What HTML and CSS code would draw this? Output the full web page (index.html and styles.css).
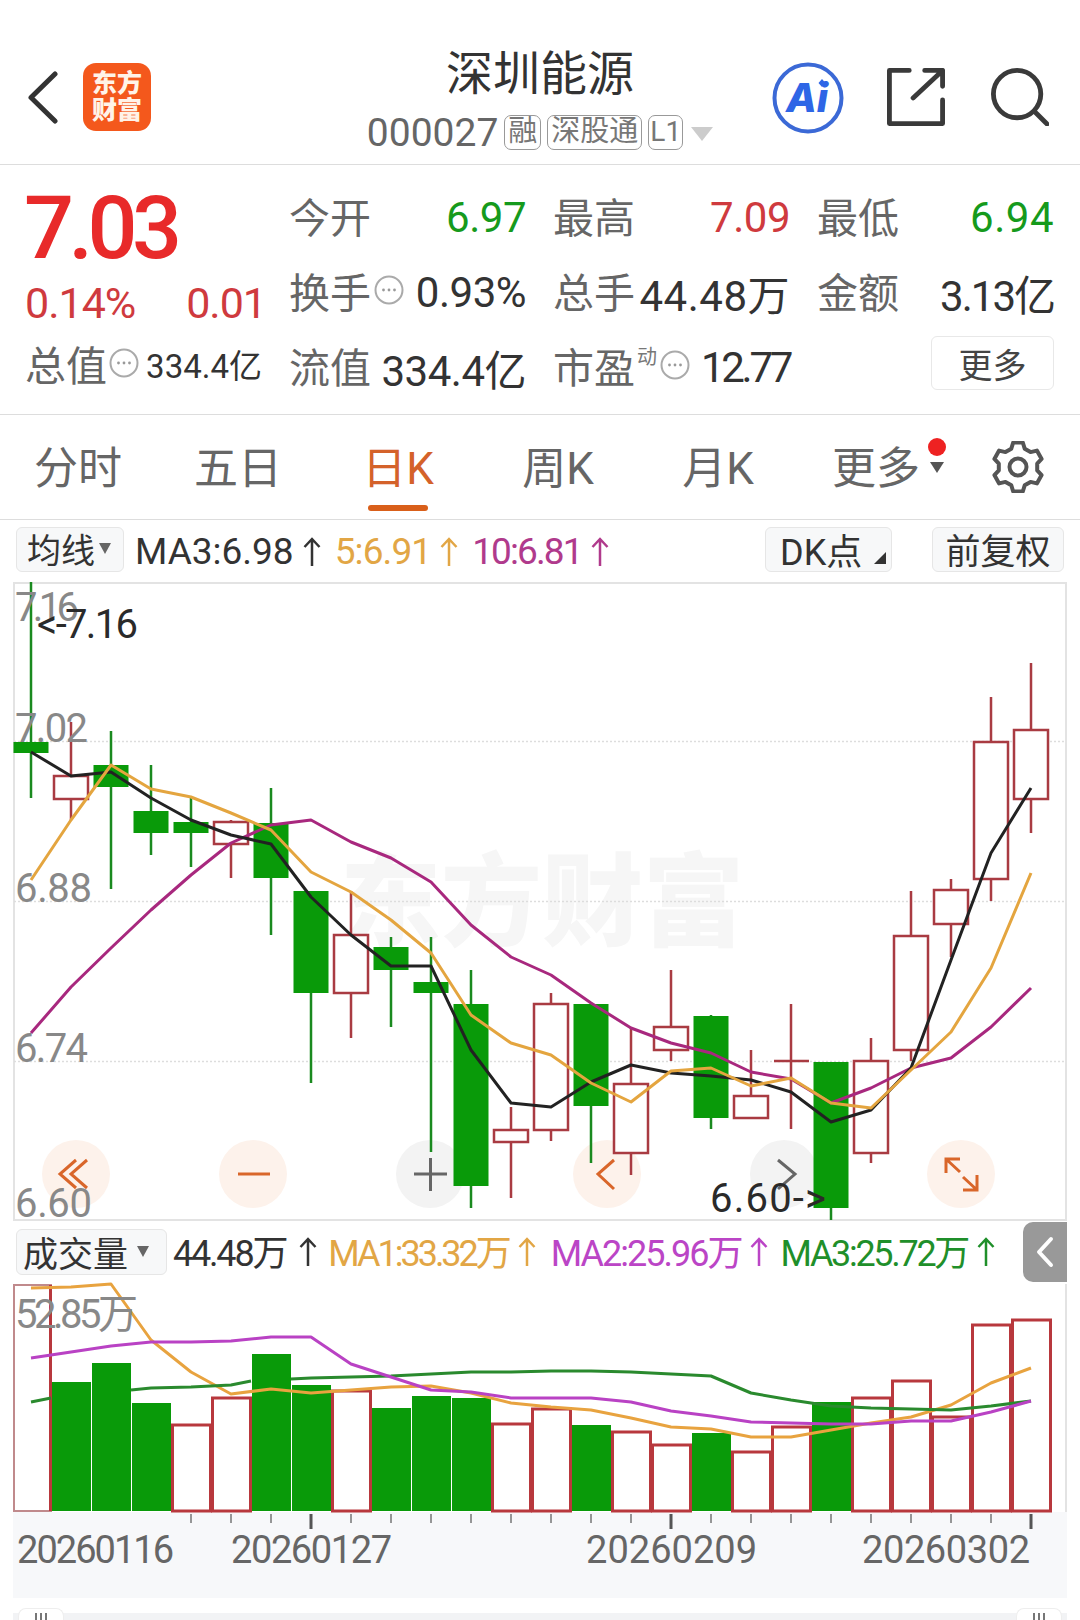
FILE: index.html
```html
<!DOCTYPE html>
<html lang="zh-CN">
<head>
  <meta charset="utf-8">
  <title>深圳能源 - 东方财富</title>
  <link rel="stylesheet" href="styles.css">
</head>
<body>
  <svg class="defs" width="0" height="0">
    <symbol id="info" viewBox="0 0 30 30">
      <circle cx="15" cy="15" r="13.5" fill="none" stroke="#aaa" stroke-width="2"/>
      <circle cx="9.5" cy="15" r="1.4" fill="#999"/>
      <circle cx="15" cy="15" r="1.4" fill="#999"/>
      <circle cx="20.5" cy="15" r="1.4" fill="#999"/>
    </symbol>
    <symbol id="up" viewBox="0 0 18 30">
      <path d="M9 29V2M1.500 10L9 2L16.500 10" fill="none" stroke="currentColor" stroke-width="2.500"/>
    </symbol>
  </svg>

  <header class="header">
    <div class="header-left">
      <svg class="back-icon" viewBox="0 0 31 53"><polyline points="28,3 4,26.5 28,50"/></svg>
      <div class="logo">东方<br>财富</div>
    </div>
    <div class="header-center">
      <div class="stock-name">深圳能源</div>
      <div class="stock-code">
        <span class="code-num">000027</span>
        <span class="tag">融</span>
        <span class="tag">深股通</span>
        <span class="tag tag-level">L1</span>
        <span class="code-caret"></span>
      </div>
    </div>
    <div class="header-right">
      <svg class="ai-icon" viewBox="0 0 72 72">
        <circle cx="36" cy="36" r="33.5"/>
        <text x="35" y="50" text-anchor="middle">Ai</text>
        <path d="M50 17l3.5 4-3.5 4-3.5-4z"/>
      </svg>
      <svg class="line-icon share-icon" viewBox="0 0 60 60">
        <path d="M23 2.500H2.500V57.500H57.500V33"/>
        <path d="M27 31L57.500 2.500M39 2.500H57.500V19"/>
      </svg>
      <svg class="line-icon search-icon" viewBox="0 0 60 60">
        <circle cx="27" cy="27" r="24.500"/>
        <path d="M45 45L58 58"/>
      </svg>
    </div>
  </header>

  <section class="quote">
    <div class="quote-main">
      <div class="price">7.03</div>
      <div class="change"><span>0.14%</span><span>0.01</span></div>
      <div class="cap-row">
        <span class="stat-label">总值</span>
        <svg class="info-icon"><use href="#info"/></svg>
        <span class="cap-value">334.4亿</span>
      </div>
    </div>
    <div class="stats">
      <div class="stat"><span class="stat-label">今开</span><span class="stat-value green">6.97</span></div>
      <div class="stat"><span class="stat-label">最高</span><span class="stat-value red">7.09</span></div>
      <div class="stat"><span class="stat-label">最低</span><span class="stat-value green wide">6.94</span></div>
      <div class="stat">
        <span class="stat-group"><span class="stat-label">换手</span><svg class="info-icon"><use href="#info"/></svg></span>
        <span class="stat-value">0.93%</span>
      </div>
      <div class="stat"><span class="stat-label">总手</span><span class="stat-value wide">44.48万</span></div>
      <div class="stat"><span class="stat-label">金额</span><span class="stat-value narrow">3.13亿</span></div>
      <div class="stat"><span class="stat-label">流值</span><span class="stat-value">334.4亿</span></div>
      <div class="stat">
        <span class="stat-group"><span class="stat-label">市盈</span><sup class="stat-sup">动</sup><svg class="info-icon"><use href="#info"/></svg></span>
        <span class="stat-value narrower">12.77</span>
      </div>
      <div class="stat stat-more"><button class="more-btn">更多</button></div>
    </div>
  </section>

  <nav class="tabs">
    <div class="tab">分时</div>
    <div class="tab">五日</div>
    <div class="tab active">日K</div>
    <div class="tab">周K</div>
    <div class="tab">月K</div>
    <div class="tab tab-more">更多<span class="tab-dot"></span><span class="tab-caret"></span></div>
    <svg class="gear-icon" viewBox="0 0 52 52">
      <polygon points="19.300,7.700 21.200,1.500 30.800,1.500 32.700,7.700 38.500,11.100 44.900,9.600 49.600,17.900 45.200,22.600 45.200,29.400 49.600,34.100 44.900,42.400 38.500,40.900 32.700,44.300 30.800,50.500 21.200,50.500 19.300,44.300 13.500,40.900 7.100,42.400 2.400,34.100 6.800,29.400 6.800,22.600 2.400,17.900 7.100,9.600 13.500,11.100"/>
      <circle cx="26" cy="26" r="8.500"/>
    </svg>
  </nav>

  <div class="ma-bar">
    <div class="select-btn ma-select">均线<span class="caret"></span></div>
    <span class="ma-item ma-black">MA3:6.98<svg class="up-arrow"><use href="#up"/></svg></span>
    <span class="ma-item ma-orange">5:6.91<svg class="up-arrow"><use href="#up"/></svg></span>
    <span class="ma-item ma-purple">10:6.81<svg class="up-arrow"><use href="#up"/></svg></span>
    <div class="select-btn dk-btn">DK点<span class="corner-caret"></span></div>
    <div class="select-btn fq-btn">前复权</div>
  </div>

  <svg class="kline" viewBox="13 582 1054 638">
    <text class="watermark" x="340" y="938">东方财富</text>
    <rect class="chart-frame" x="14" y="583" width="1052" height="637"/>
    <path class="grid-line" d="M14 741.500H1066M14 901.500H1066M14 1061.500H1066"/>

    <circle class="pad-warm" cx="76" cy="1174" r="34"/>
    <circle class="pad-warm" cx="253" cy="1174" r="34"/>
    <circle class="pad-grey" cx="430" cy="1174" r="34"/>
    <circle class="pad-warm" cx="607" cy="1174" r="34"/>
    <circle class="pad-grey" cx="784" cy="1174" r="34"/>
    <circle class="pad-warm" cx="961" cy="1174" r="34"/>

    <g class="candle-up">
      <path d="M71 722V820M231 820V878M351 891V1038M511 1107V1198M551 993V1141M631 1028V1175M671 970V1061M751 1050V1096M791 1004V1129M774 1061H809M871 1038V1163M911 891V1061M951 879V957M991 697V901M1031 663V833"/>
      <rect x="54" y="776" width="34" height="23"/>
      <rect x="214" y="822" width="34" height="22"/>
      <rect x="334" y="935" width="34" height="58"/>
      <rect x="494" y="1130" width="34" height="12"/>
      <rect x="534" y="1004" width="34" height="126"/>
      <rect x="614" y="1084" width="34" height="69"/>
      <rect x="654" y="1027" width="34" height="23"/>
      <rect x="734" y="1096" width="34" height="22"/>
      <rect x="854" y="1061" width="34" height="92"/>
      <rect x="894" y="936" width="34" height="114"/>
      <rect x="934" y="890" width="34" height="34"/>
      <rect x="974" y="742" width="34" height="137"/>
      <rect x="1014" y="730" width="34" height="69"/>
    </g>
    <g class="candle-down">
      <path d="M31 582V798M111 731V889M151 765V855M191 798V867M271 788V935M311 891V1083M391 937V1027M431 937V1152M471 970V1208M591 1004V1163M711 1015V1129M831 1062V1220"/>
      <rect x="13.500" y="742" width="35" height="11"/>
      <rect x="93.500" y="765" width="35" height="22"/>
      <rect x="133.500" y="811" width="35" height="22"/>
      <rect x="173.500" y="822" width="35" height="11"/>
      <rect x="253.500" y="823" width="35" height="55"/>
      <rect x="293.500" y="891" width="35" height="102"/>
      <rect x="373.500" y="947" width="35" height="23"/>
      <rect x="413.500" y="982" width="35" height="11"/>
      <rect x="453.500" y="1004" width="35" height="182"/>
      <rect x="573.500" y="1004" width="35" height="102"/>
      <rect x="693.500" y="1016" width="35" height="102"/>
      <rect x="813.500" y="1062" width="35" height="146"/>
    </g>

    <polyline class="line-purple" points="31,1033 71,987 111,948 151,910 191,875 231,843 271,825 311,820 351,842 391,858 431,882 471,925 511,957 551,975 591,1003 631,1028 671,1043 711,1053 751,1072 791,1079 831,1103 871,1088 911,1068 951,1058 991,1027 1031,988"/>
    <polyline class="line-black" points="31,752 71,776 111,772 151,798 191,820 231,835 271,844 311,897 351,935 391,966 431,966 471,1050 511,1103 551,1107 591,1082 631,1065 671,1073 711,1076 751,1080 791,1092 831,1122 871,1110 911,1068 951,960 991,853 1031,788"/>
    <polyline class="line-orange" points="31,880 71,820 111,765 151,789 191,797 231,813 271,830 311,872 351,892 391,920 431,953 471,1015 511,1043 551,1055 591,1083 631,1102 671,1071 711,1068 751,1086 791,1078 831,1103 871,1108 911,1070 951,1032 991,968 1031,873"/>

    <path class="pad-icon warm" d="M76 1160L60 1174L76 1188M87 1160L71 1174L87 1188M238 1174H270M614 1160L598 1174L614 1189M946 1173V1159H960M946 1159L960 1172M977 1175V1190H963M977 1190L963 1177"/>
    <path class="pad-icon grey" d="M414 1174H447M430.500 1158V1191M778 1160L795 1174L778 1189"/>

    <text class="axis-label" x="15" y="621" textLength="64">7.16</text>
    <text class="axis-label" x="15" y="742" textLength="73">7.02</text>
    <text class="axis-label" x="15" y="902" textLength="77">6.88</text>
    <text class="axis-label" x="15" y="1062" textLength="73">6.74</text>
    <text class="axis-label" x="15" y="1217" textLength="77">6.60</text>
    <text class="mark-label" x="37" y="638" textLength="101">&lt;-7.16</text>
    <text class="mark-label" x="710" y="1212" textLength="116">6.60-&gt;</text>
  </svg>

  <div class="vol-bar">
    <div class="select-btn vol-select">成交量<span class="caret"></span></div>
    <span class="ma-item vol-total">44.48万<svg class="up-arrow"><use href="#up"/></svg></span>
    <span class="ma-item ma-orange">MA1:33.32万<svg class="up-arrow"><use href="#up"/></svg></span>
    <span class="ma-item ma-magenta">MA2:25.96万<svg class="up-arrow"><use href="#up"/></svg></span>
    <span class="ma-item ma-green">MA3:25.72万<svg class="up-arrow"><use href="#up"/></svg></span>
    <div class="side-tab">
      <svg viewBox="0 0 20 32"><polyline points="16,3 4,16 16,29"/></svg>
    </div>
  </div>

  <svg class="volume" viewBox="13 1284 1054 314">
    <rect class="axis-band" x="13" y="1512" width="1054" height="86"/>
    <path class="chart-side" d="M1066 1284V1512"/>
    <rect class="bar-first" x="14" y="1285" width="37" height="226"/>
    <path class="bar-first-edge" d="M50.500 1285V1511"/>
    <g class="bar-up">
      <rect x="172.500" y="1425" width="38" height="86"/>
      <rect x="212.500" y="1398" width="38" height="113"/>
      <rect x="332.500" y="1391" width="38" height="120"/>
      <rect x="492.500" y="1424" width="38" height="87"/>
      <rect x="532.500" y="1409" width="38" height="102"/>
      <rect x="612.500" y="1432" width="38" height="79"/>
      <rect x="652.500" y="1445" width="38" height="66"/>
      <rect x="732.500" y="1452" width="38" height="59"/>
      <rect x="772.500" y="1427" width="38" height="84"/>
      <rect x="852.500" y="1398" width="38" height="113"/>
      <rect x="892.500" y="1381" width="38" height="130"/>
      <rect x="932.500" y="1417" width="38" height="94"/>
      <rect x="972.500" y="1325" width="38" height="186"/>
      <rect x="1012.500" y="1320" width="38" height="191"/>
    </g>
    <g class="bar-down">
      <rect x="52" y="1382" width="39" height="129"/>
      <rect x="92" y="1363" width="39" height="148"/>
      <rect x="132" y="1403" width="39" height="108"/>
      <rect x="252" y="1354" width="39" height="157"/>
      <rect x="292" y="1385" width="39" height="126"/>
      <rect x="372" y="1408" width="39" height="103"/>
      <rect x="412" y="1396" width="39" height="115"/>
      <rect x="452" y="1398" width="39" height="113"/>
      <rect x="572" y="1425" width="39" height="86"/>
      <rect x="692" y="1433" width="39" height="78"/>
      <rect x="812" y="1402" width="39" height="109"/>
    </g>
    <polyline class="vol-orange" points="31,1288 71,1287 111,1284 151,1340 191,1372 231,1394 271,1389 311,1393 351,1390 391,1387 431,1386 471,1393 511,1403 551,1407 591,1410 631,1418 671,1427 711,1429 751,1437 791,1437 831,1430 871,1423 911,1417 951,1405 991,1383 1031,1368"/>
    <polyline class="vol-green" points="31,1402 51,1398"/>
    <polyline class="vol-green" points="131,1390 151,1388 191,1387 231,1385 251,1381"/>
    <polyline class="vol-green" points="291,1379 311,1378 351,1377 391,1376 431,1374 471,1372 511,1372 551,1371 591,1371 631,1372 671,1374 711,1376 751,1393 791,1400 831,1406 871,1408 911,1409 951,1410 991,1406 1031,1401"/>
    <polyline class="vol-magenta" points="31,1358 71,1352 111,1346 151,1342 191,1342 231,1341 271,1337 311,1337 351,1364 391,1377 431,1390 471,1392 511,1398 551,1398 591,1398 631,1402 671,1411 711,1416 751,1422 791,1423 831,1424 871,1424 911,1421 951,1421 991,1412 1031,1401"/>
    <text class="axis-label" x="15" y="1328" textLength="123">52.85万</text>

    <path class="tick" d="M191 1514V1523M231 1514V1523M271 1514V1523M351 1514V1523M391 1514V1523M431 1514V1523M471 1514V1523M511 1514V1523M551 1514V1523M591 1514V1523M631 1514V1523M711 1514V1523M751 1514V1523M791 1514V1523M831 1514V1523M871 1514V1523M911 1514V1523M951 1514V1523M991 1514V1523"/>
    <path class="tick-major" d="M311 1514V1529M671 1514V1529M1031 1514V1529"/>
    <text class="date-label" x="17" y="1563" textLength="157">20260116</text>
    <text class="date-label" x="231" y="1563" textLength="161">20260127</text>
    <text class="date-label" x="586" y="1563" textLength="171">20260209</text>
    <text class="date-label" x="862" y="1563" textLength="168">20260302</text>
  </svg>

  <div class="range">
    <div class="range-handle"><span></span><span></span><span></span></div>
    <div class="range-handle"><span></span><span></span><span></span></div>
  </div>
</body>
</html>
```

FILE: styles.css
```css
* {
  box-sizing: border-box;
}

html, body {
  margin: 0;
  height: 1620px;
  overflow: hidden;
}

body {
  width: 1080px;
  background: #fff;
  color: #333;
  font-family: Roboto, "Noto Sans CJK SC", sans-serif;
}

.defs {
  position: absolute;
}

/* top bar */
.header {
  display: grid;
  grid-template-columns: 1fr auto 1fr;
  height: 165px;
  border-bottom: 1px solid #ddd;
}

.header-left {
  display: flex;
  align-items: flex-start;
  padding: 63px 0 0 27px;
  gap: 25px;
}

.back-icon {
  width: 31px;
  height: 53px;
  margin-top: 8px;
}

.back-icon polyline {
  fill: none;
  stroke: #333;
  stroke-width: 5;
  stroke-linecap: round;
  stroke-linejoin: round;
}

.logo {
  width: 68px;
  height: 68px;
  padding-top: 7px;
  background: #f4581c;
  border-radius: 13px;
  color: #fff3e8;
  font-size: 25px;
  font-weight: 900;
  line-height: 27px;
  text-align: center;
}

.header-center {
  padding-top: 44px;
  text-align: center;
}

.stock-name {
  font-size: 47px;
  line-height: 60px;
  color: #333;
}

.stock-code {
  display: flex;
  align-items: center;
  gap: 6px;
  margin-top: 11px;
  height: 35px;
  color: #666;
}

.code-num {
  font-size: 39px;
  line-height: 35px;
  padding-top: 2px;
}

.tag {
  height: 35px;
  padding: 0 3px;
  border: 1.500px solid #999;
  border-radius: 7px;
  font-size: 29px;
  line-height: 31px;
  color: #777;
}

.tag-level {
  padding: 0 1px;
  font-size: 28px;
}

.code-caret {
  width: 0;
  height: 0;
  margin: 2px 0 0 2px;
  border-left: 11px solid transparent;
  border-right: 11px solid transparent;
  border-top: 14px solid #ccc;
}

.header-right {
  display: flex;
  justify-content: flex-end;
  align-items: flex-start;
  gap: 46px;
  padding: 62px 31px 0 0;
}

.ai-icon {
  width: 72px;
  height: 72px;
  margin-right: -3px;
}

.ai-icon circle {
  fill: none;
  stroke: #3b69d6;
  stroke-width: 4;
}

.ai-icon text {
  fill: #2e66e6;
  font-family: Inter, sans-serif;
  font-size: 40px;
  font-style: italic;
  font-weight: 800;
}

.ai-icon path {
  fill: #2e66e6;
}

.line-icon {
  width: 58px;
  height: 58px;
  margin-top: 6px;
  fill: none;
  stroke: #3a3a3a;
  stroke-width: 5;
  stroke-linecap: round;
  stroke-linejoin: round;
}

/* quote block */
.quote {
  display: flex;
  gap: 27px;
  height: 250px;
  padding: 15px 25px 0;
  border-bottom: 1px solid #ddd;
}

.quote-main {
  width: 237px;
  flex: none;
}

.price {
  height: 96px;
  margin-left: -1px;
  color: #e82a2a;
  font-size: 88px;
  font-weight: 500;
  letter-spacing: -5.500px;
  line-height: 96px;
}

.change {
  display: flex;
  justify-content: space-between;
  margin-right: -4px;
  color: #cf3a3e;
  font-size: 43px;
  letter-spacing: -1px;
  line-height: 54px;
}

.cap-row {
  display: flex;
  align-items: center;
  height: 72px;
}

.cap-row .info-icon {
  margin: -6px 0 0 2px;
}

.cap-value {
  margin: -4px 0 0 auto;
  font-size: 33px;
  color: #333;
}

.stats {
  display: grid;
  grid-template-columns: repeat(3, 237px);
  grid-auto-rows: 75px;
  column-gap: 27px;
}

.stat {
  display: flex;
  justify-content: space-between;
  align-items: center;
}

.stat-group {
  display: flex;
  align-items: center;
}

.stat-label {
  margin-top: -6px;
  color: #666;
  font-size: 41px;
}

.stat-value {
  color: #333;
  font-size: 42px;
  letter-spacing: -0.500px;
}

.stat-value.green {
  color: #169a1c;
}

.stat-value.red {
  color: #cf3a3e;
}

.stat-value.wide {
  letter-spacing: 0.500px;
}

.stat-value.narrow {
  letter-spacing: -2px;
}

.stat-value.narrower {
  letter-spacing: -3.300px;
}

.stat-sup {
  align-self: flex-start;
  margin: 3px 0 0 2px;
  color: #777;
  font-size: 20px;
  line-height: 26px;
}

.info-icon {
  width: 30px;
  height: 30px;
  margin: -6px 0 0 3px;
}

.stat-more {
  justify-content: flex-end;
  padding-bottom: 9px;
}

.more-btn {
  width: 123px;
  height: 54px;
  padding: 0;
  background: #fff;
  border: 1.500px solid #e8e8e8;
  border-radius: 6px;
  color: #444;
  font-family: inherit;
  font-size: 34px;
}

/* period tabs */
.tabs {
  display: flex;
  align-items: center;
  height: 105px;
  margin-left: -2px;
  border-bottom: 1px solid #ddd;
}

.tab {
  position: relative;
  width: 160px;
  height: 104px;
  color: #666;
  font-size: 44px;
  line-height: 108px;
  text-align: center;
}

.tab.active {
  color: #d4622a;
}

.tab.active::after {
  content: "";
  position: absolute;
  left: 50px;
  bottom: 8px;
  width: 60px;
  height: 6px;
  background: #d95f1a;
  border-radius: 3px;
}

.tab-more {
  padding-right: 4px;
}

.tab-dot {
  position: absolute;
  left: 130px;
  top: 23px;
  width: 18px;
  height: 18px;
  background: #ee2222;
  border-radius: 50%;
}

.tab-caret {
  position: absolute;
  left: 132px;
  top: 47px;
  border-left: 7px solid transparent;
  border-right: 7px solid transparent;
  border-top: 11px solid #555;
}

.gear-icon {
  width: 52px;
  height: 52px;
  margin-left: 34px;
  fill: none;
  stroke: #555;
  stroke-width: 4;
  stroke-linejoin: round;
}

/* indicator rows */
.ma-bar,
.vol-bar {
  display: flex;
  align-items: center;
  height: 62px;
  padding-left: 16px;
}

.ma-bar {
  padding-bottom: 3px;
}

.select-btn {
  display: flex;
  flex: none;
  align-items: center;
  height: 45px;
  padding-bottom: 2px;
  background: #f7f8f9;
  border: 1.500px solid #e6e6e6;
  border-radius: 6px;
  color: #333;
  font-size: 34px;
}

.ma-select {
  width: 108px;
  padding-left: 10px;
  margin-right: 11px;
}

.caret {
  margin-left: 4px;
  border-left: 6px solid transparent;
  border-right: 6px solid transparent;
  border-top: 11px solid #666;
}

.ma-item {
  display: flex;
  flex: none;
  align-items: center;
  margin: 4px 14px 0 0;
  font-size: 37px;
  white-space: nowrap;
}

.up-arrow {
  width: 18px;
  height: 30px;
  margin-left: 9px;
}

.ma-black,
.vol-total {
  color: #333;
}

.ma-orange {
  color: #e2a645;
}

.ma-purple {
  color: #b03a8c;
}

.ma-magenta {
  color: #bb45c6;
}

.ma-green {
  color: #1f8f2a;
}

.ma-bar .ma-orange {
  letter-spacing: -0.900px;
}

.ma-bar .ma-purple {
  letter-spacing: -1.900px;
}

.dk-btn {
  position: relative;
  width: 127px;
  margin-left: auto;
  padding-left: 14px;
  font-size: 36px;
}

.corner-caret {
  position: absolute;
  right: 5px;
  bottom: 7px;
  border-left: 12px solid transparent;
  border-bottom: 12px solid #333;
}

.fq-btn {
  justify-content: center;
  width: 132px;
  margin: 0 16px 0 40px;
  font-size: 35px;
}

.kline,
.volume {
  display: block;
  margin-left: 13px;
  width: 1054px;
  overflow: visible;
}

.kline {
  height: 638px;
}

.volume {
  height: 314px;
}

.watermark {
  fill: #f6f6f6;
  font-family: "Noto Sans CJK SC", sans-serif;
  font-size: 101px;
  font-weight: 900;
}

.chart-frame {
  fill: none;
  stroke: #e3e3e3;
  stroke-width: 2;
}

.grid-line {
  fill: none;
  stroke: #ddd;
  stroke-width: 1.500;
  stroke-dasharray: 2 2;
}

.pad-warm {
  fill: #fdf2eb;
}

.pad-grey {
  fill: #f3f3f3;
}

.candle-up path,
.candle-up rect {
  stroke: #a93b42;
  stroke-width: 2.500;
}

.candle-up path {
  fill: none;
}

.candle-up rect {
  fill: #fff;
}

.candle-down path {
  fill: none;
  stroke: #1a8a1f;
  stroke-width: 2.500;
}

.candle-down rect {
  fill: #099a09;
}

.line-black,
.line-orange,
.line-purple {
  fill: none;
  stroke-width: 3;
  stroke-linejoin: round;
}

.line-black {
  stroke: #222;
}

.line-orange {
  stroke: #e4a53f;
}

.line-purple {
  stroke: #a8287e;
}

.pad-icon {
  fill: none;
  stroke-width: 3;
}

.pad-icon.warm {
  stroke: #d9662a;
}

.pad-icon.grey {
  stroke: #666;
}

.axis-label {
  fill: #888;
  font-size: 40px;
}

.mark-label {
  fill: #2a2a2a;
  font-size: 40px;
}

.vol-bar {
  height: 64px;
}

.vol-select {
  width: 151px;
  height: 46px;
  padding-left: 6px;
  margin-right: 6px;
  font-size: 35px;
}

.vol-select .caret {
  margin-left: 9px;
}

.vol-bar .ma-item {
  margin: -4px 15px 0 0;
  font-size: 36px;
}

.vol-bar .up-arrow {
  margin: 4px 0 0 9px;
}

.vol-bar .vol-total {
  letter-spacing: -2.200px;
  margin-right: 11px;
}

.vol-bar .vol-total .up-arrow {
  margin-left: 13px;
}

.vol-bar .ma-orange {
  letter-spacing: -3px;
}

.vol-bar .ma-magenta {
  letter-spacing: -2px;
  margin-right: 12px;
}

.vol-bar .ma-green {
  letter-spacing: -2.300px;
}

.side-tab {
  display: flex;
  flex: none;
  align-items: center;
  justify-content: center;
  width: 44px;
  height: 60px;
  margin: 0 13px 0 auto;
  background: #999;
  border-radius: 10px 0 0 10px;
}

.side-tab svg {
  width: 20px;
  height: 32px;
  fill: none;
  stroke: #fff;
  stroke-width: 4;
  stroke-linecap: round;
  stroke-linejoin: round;
}

.axis-band {
  fill: #f7f8fa;
}

.chart-side {
  fill: none;
  stroke: #e3e3e3;
  stroke-width: 2;
}

.bar-first {
  fill: #fff;
  stroke: #c08a8c;
  stroke-width: 2;
}

.bar-first-edge {
  fill: none;
  stroke: #b8383d;
  stroke-width: 3;
}

.bar-up rect {
  fill: #fff;
  stroke: #b8383d;
  stroke-width: 3;
}

.bar-down rect {
  fill: #099a09;
}

.vol-orange,
.vol-green,
.vol-magenta {
  fill: none;
  stroke-width: 3;
  stroke-linejoin: round;
}

.vol-orange {
  stroke: #e8a33f;
}

.vol-green {
  stroke: #2a8a2e;
}

.vol-magenta {
  stroke: #b942c4;
}

.tick {
  fill: none;
  stroke: #777;
  stroke-width: 1.500;
}

.tick-major {
  fill: none;
  stroke: #555;
  stroke-width: 3;
}

.date-label {
  fill: #666;
  font-size: 38px;
}

/* range slider at the bottom edge */
.range {
  display: flex;
  justify-content: space-between;
  height: 12px;
  margin: 10px 13px 0;
  padding: 0 5px;
  background: linear-gradient(transparent 5px, #f2f3f5 5px);
}

.range-handle {
  display: flex;
  justify-content: center;
  gap: 3px;
  width: 46px;
  padding-top: 4px;
  background: #fff;
  border: 1.500px solid #eee;
  border-bottom: 0;
  border-radius: 8px 8px 0 0;
}

.range-handle span {
  width: 2px;
  height: 10px;
  background: #777;
}
```
